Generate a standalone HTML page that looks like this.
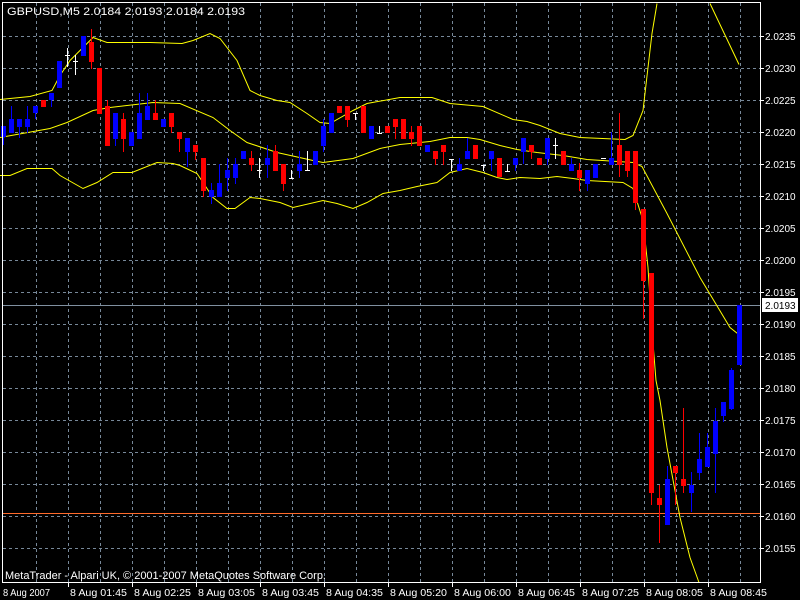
<!DOCTYPE html>
<html><head><meta charset="utf-8"><style>
html,body{margin:0;padding:0;background:#000;width:800px;height:600px;overflow:hidden}
svg{display:block}
text{font-family:"Liberation Sans",sans-serif;font-size:10px;fill:#fff}
</style></head><body>
<svg id="s" width="800" height="600" viewBox="0 0 800 600" xmlns="http://www.w3.org/2000/svg">
<rect width="800" height="600" fill="#000"/>
<g id="grid" stroke="#778899" stroke-width="1" stroke-dasharray="3,3"></g>
<line x1="2" y1="305.5" x2="760" y2="305.5" stroke="#8090a0"/>
<line x1="2" y1="513.5" x2="760" y2="513.5" stroke="#ff6a2a"/>
<g id="bands" fill="none" stroke="#ffff00" stroke-width="1"></g>
<g id="c"></g>
<rect x="2.5" y="2.5" width="758" height="580" fill="none" stroke="#fff"/>
<g id="ticks" stroke="#fff"></g>
<text x="7" y="15" style="font-size:11px" textLength="238" lengthAdjust="spacingAndGlyphs">GBPUSD,M5  2.0184 2.0193 2.0184 2.0193</text>
<text x="5" y="579" style="font-size:11px" textLength="321" lengthAdjust="spacingAndGlyphs">MetaTrader - Alpari UK, © 2001-2007 MetaQuotes Software Corp.</text>
<g id="plabels">
<text x="765" y="40">2.0235</text>
<text x="765" y="72">2.0230</text>
<text x="765" y="104">2.0225</text>
<text x="765" y="136">2.0220</text>
<text x="765" y="168">2.0215</text>
<text x="765" y="200">2.0210</text>
<text x="765" y="232">2.0205</text>
<text x="765" y="264">2.0200</text>
<text x="765" y="296">2.0195</text>
<text x="765" y="328">2.0190</text>
<text x="765" y="360">2.0185</text>
<text x="765" y="392">2.0180</text>
<text x="765" y="424">2.0175</text>
<text x="765" y="456">2.0170</text>
<text x="765" y="488">2.0165</text>
<text x="765" y="520">2.0160</text>
<text x="765" y="552">2.0155</text>
</g>
<rect x="762" y="298" width="36" height="14" fill="#fff"/>
<text x="765" y="309" style="fill:#000">2.0193</text>
<g>
<text x="3" y="596" textLength="47" lengthAdjust="spacingAndGlyphs">8 Aug 2007</text>
<text x="70" y="596" textLength="57" lengthAdjust="spacingAndGlyphs">8 Aug 01:45</text>
<text x="134" y="596" textLength="57" lengthAdjust="spacingAndGlyphs">8 Aug 02:25</text>
<text x="198" y="596" textLength="57" lengthAdjust="spacingAndGlyphs">8 Aug 03:05</text>
<text x="262" y="596" textLength="57" lengthAdjust="spacingAndGlyphs">8 Aug 03:45</text>
<text x="326" y="596" textLength="57" lengthAdjust="spacingAndGlyphs">8 Aug 04:35</text>
<text x="390" y="596" textLength="57" lengthAdjust="spacingAndGlyphs">8 Aug 05:20</text>
<text x="454" y="596" textLength="57" lengthAdjust="spacingAndGlyphs">8 Aug 06:00</text>
<text x="518" y="596" textLength="57" lengthAdjust="spacingAndGlyphs">8 Aug 06:45</text>
<text x="582" y="596" textLength="57" lengthAdjust="spacingAndGlyphs">8 Aug 07:25</text>
<text x="646" y="596" textLength="57" lengthAdjust="spacingAndGlyphs">8 Aug 08:05</text>
<text x="710" y="596" textLength="57" lengthAdjust="spacingAndGlyphs">8 Aug 08:45</text>
</g>
</svg>
<script>
var NS="http://www.w3.org/2000/svg";
function el(p,n,a){var e=document.createElementNS(NS,n);for(var k in a)e.setAttribute(k,a[k]);document.getElementById(p).appendChild(e);return e;}
for(var y=36;y<=548;y+=32)el("grid","line",{x1:3,y1:y+.5,x2:760,y2:y+.5});
for(var x=36;x<=740;x+=32)el("grid","line",{x1:x+.5,y1:3,x2:x+.5,y2:582});
for(var y=36;y<=548;y+=32)el("ticks","line",{x1:761,y1:y+.5,x2:764,y2:y+.5});
for(var x=68;x<=708;x+=64)el("ticks","line",{x1:x+.5,y1:583,x2:x+.5,y2:587});
var up=[[0,99],[30,96],[52,90],[60,75],[70,60],[80,50],[93,37],[107,42],[150,42],[182,43],[193,40],[210,33],[220,38],[237,60],[250,90],[260,95],[277,100],[290,102],[307,113],[320,122],[330,123],[353,110],[367,103],[400,97],[432,97],[450,103],[483,106],[513,119],[527,121],[540,125],[560,133],[580,137],[625,139],[633,135],[643,110],[648,67],[652,33],[657,3]];
var up2=[[710,3],[739,64]];
var mid=[[0,137],[50,128],[67,122],[93,110],[110,107],[153,102],[180,103],[213,117],[230,130],[247,142],[277,152],[313,160],[323,162],[353,158],[380,148],[400,144],[430,141],[450,137],[467,137],[480,139],[500,145],[517,149],[537,152],[563,155],[587,159],[633,162],[642,166],[667,213],[700,277],[730,327],[740,335]];
var lo=[[0,175],[10,175],[27,168],[52,168],[60,175],[83,188],[97,182],[113,172],[132,172],[157,162],[173,163],[180,165],[197,173],[213,197],[227,208],[235,208],[250,197],[260,198],[280,202],[293,207],[323,200],[337,203],[353,208],[367,202],[383,193],[400,190],[417,186],[437,182],[450,172],[467,168],[483,172],[497,177],[507,179],[520,177],[540,178],[557,176],[573,178],[587,180],[623,182],[633,188],[643,220],[648,267],[652,330],[656,380],[660,400],[667,447],[680,517],[690,557],[699,582]];
[up,up2,mid,lo].forEach(function(p){el("bands","polyline",{points:p.map(function(q){return q[0]+","+(q[1]+.5)}).join(" ")});});
var d=[
[0,"b",126,137,126,145],[1,"b",119,133,106,133],[2,"b",119,127,119,138],[3,"b",119,127,106,133],[4,"b",106,113,106,119],[5,"r",100,107,100,107],[6,"b",93,100,93,107],[7,"b",61,88,61,88],[8,"w",55,55,48,67],[9,"w",61,61,55,75],[10,"b",36,56,36,56],[11,"r",42,62,29,69],[12,"r",68,114,68,114],[13,"r",106,146,100,146],[14,"b",113,139,113,146],[15,"r",119,139,113,152],[16,"b",132,146,132,146],[17,"b",113,139,93,139],[18,"b",106,120,93,120],[19,"r",113,120,100,120],[20,"b",119,127,119,127],[21,"r",113,127,113,133],[22,"r",132,139,132,152],[23,"b",138,152,138,167],[24,"r",145,152,145,160],[25,"r",158,191,158,197],[26,"b",190,197,183,204],[27,"b",183,197,164,197],[28,"b",170,178,158,191],[29,"b",164,178,158,184],[30,"b",151,159,151,159],[31,"r",158,165,151,171],[32,"w",170,170,158,178],[33,"b",158,165,145,178],[34,"r",151,171,145,171],[35,"r",164,184,164,191],[36,"w",178,178,170,178],[37,"b",164,171,151,178],[38,"w",170,170,151,170],[39,"b",151,165,151,165],[40,"b",126,146,119,152],[41,"b",113,133,113,133],[42,"r",106,113,106,113],[43,"r",106,120,106,127],[44,"w",113,113,113,120],[45,"r",106,133,106,133],[46,"b",126,139,126,139],[47,"w",133,133,126,133],[48,"r",126,133,126,133],[49,"r",119,127,119,139],[50,"r",119,139,119,139],[51,"r",132,139,126,146],[52,"r",126,146,126,146],[53,"b",145,152,145,152],[54,"r",151,159,151,165],[55,"r",145,152,145,165],[56,"w",159,159,159,171],[57,"b",164,171,158,171],[58,"b",151,159,138,159],[59,"r",145,159,145,159],[60,"w",165,165,165,171],[61,"b",151,159,151,171],[62,"r",158,177,158,177],[63,"w",171,171,164,171],[64,"b",158,165,158,171],[65,"b",138,152,138,164],[66,"r",145,152,145,159],[67,"r",158,165,158,165],[68,"b",138,159,138,165],[69,"w",145,145,138,159],[70,"r",151,165,151,165],[71,"b",164,171,158,171],[72,"r",170,178,163,191],[73,"b",170,184,170,191],[74,"b",164,178,164,178],[75,"w",158,158,158,158],[76,"b",158,165,132,165],[77,"r",145,165,113,177],[78,"r",151,171,151,177],[79,"r",151,203,151,210],[80,"r",209,281,209,319],[81,"r",273,493,273,505],[82,"r",498,505,485,543],[83,"b",479,525,466,525],[84,"r",466,473,466,505],[85,"r",479,486,408,493],[86,"b",485,493,472,512],[87,"b",459,473,433,480],[88,"b",447,467,433,467],[89,"b",421,454,408,493],[90,"b",402,416,402,422],[91,"b",370,409,368,410],[92,"b",305,365,305,365]];
var col={r:"#ff0000",b:"#0000ff",w:"#ffffff"};
d.forEach(function(c){var x=1+8*c[0],f=col[c[1]];
el("c","rect",{x:x+2,y:c[4],width:1,height:Math.max(1,c[5]-c[4]),fill:f});
if(c[1]=="w")el("c","rect",{x:x,y:c[2],width:5,height:1,fill:f});
else el("c","rect",{x:x,y:c[2],width:5,height:Math.max(1,c[3]-c[2]),fill:f});});
</script>
</body></html>
